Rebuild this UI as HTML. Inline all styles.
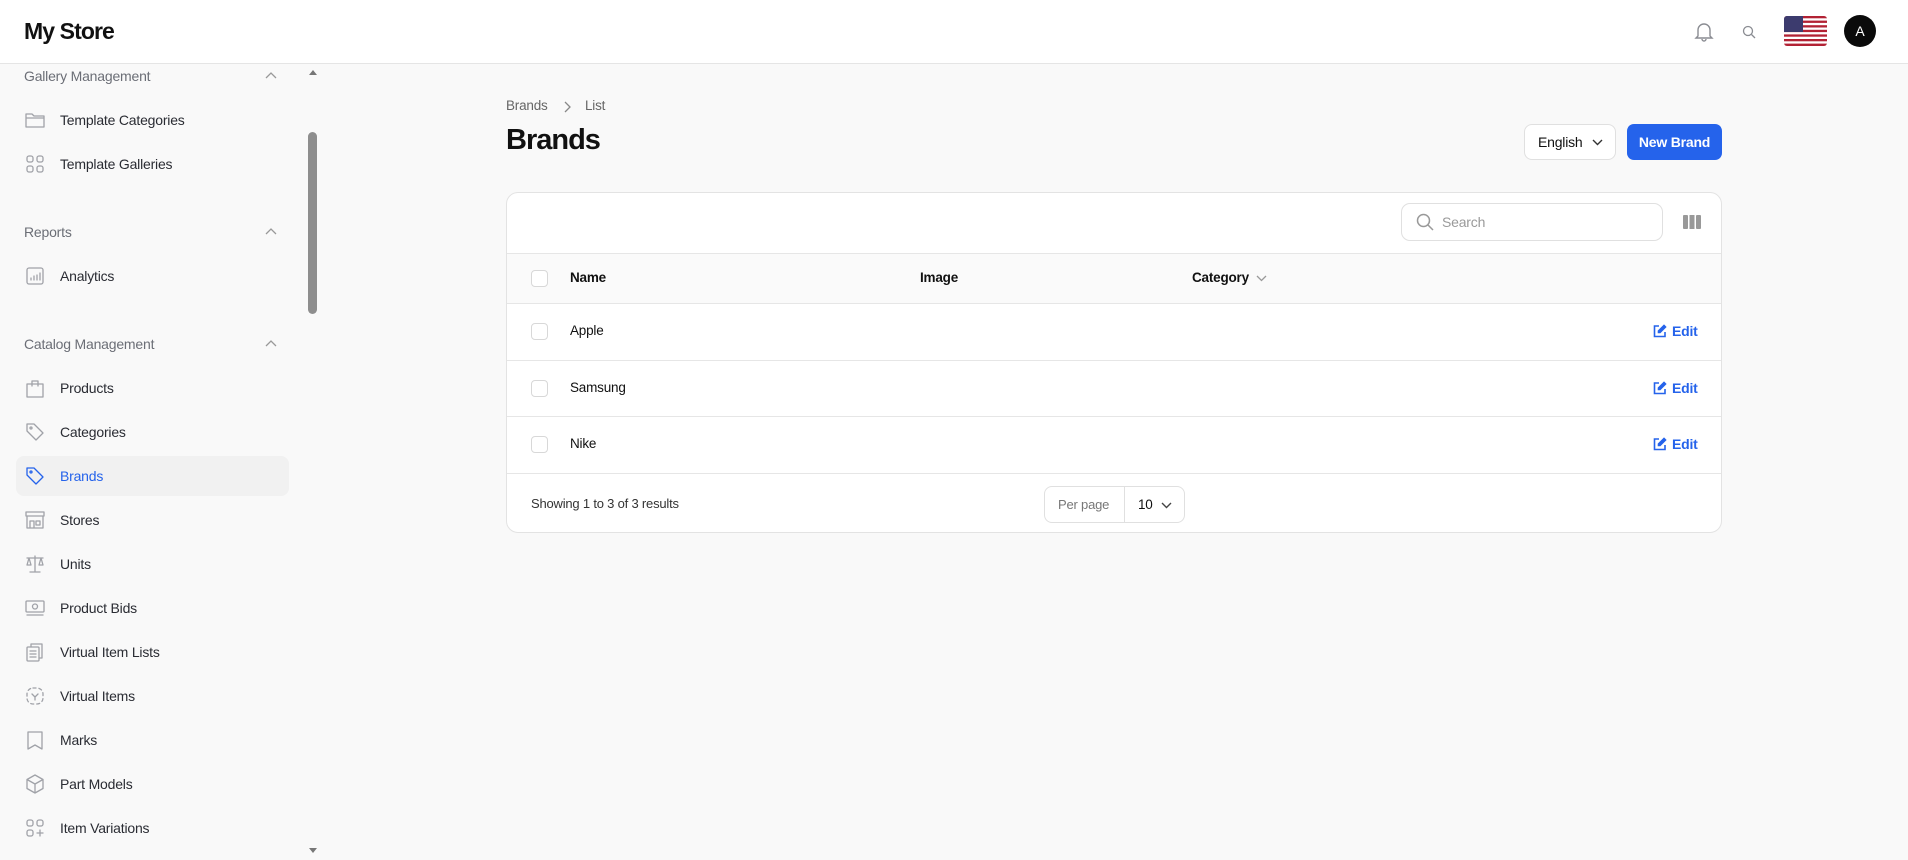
<!DOCTYPE html>
<html><head><meta charset="utf-8"><style>
*{box-sizing:border-box;margin:0;padding:0}
body{width:1908px;height:860px;overflow:hidden;background:#f9f9f9;font-family:"Liberation Sans",sans-serif;color:#111;position:relative;letter-spacing:-0.2px}
.hdr{position:absolute;left:0;top:0;width:1908px;height:64px;background:#fff;border-bottom:1px solid #e5e5e5}
.logo{position:absolute;left:24px;top:18px;font-size:23px;font-weight:bold;letter-spacing:-0.9px}
.side{position:absolute;left:0;top:64px;width:305px;height:796px;background:#f9f9f9}
.sb{position:absolute;left:305px;top:64px;width:15px;height:796px;background:#f9f9f9}
.thumb{position:absolute;left:308px;top:132px;width:9px;height:182px;background:#8e8e8e;border-radius:5px}
.grp{position:absolute;left:24px;font-size:14px;color:#6b6e76}
.chev{position:absolute;left:265px;width:12px;height:8px}
.it{position:absolute;left:24px;font-size:14px;color:#2a2c33;height:20px;line-height:20px}
.it svg{position:absolute;left:0;top:-1px;width:22px;height:22px;fill:none;stroke:#a0a2a8;stroke-width:1.3;stroke-linecap:round;stroke-linejoin:round}
.it span{position:absolute;left:36px;white-space:nowrap}
.act{position:absolute;left:16px;top:456px;width:273px;height:40px;background:#f1f1f1;border-radius:8px}
.card{position:absolute;left:506px;top:192px;width:1216px;height:341px;background:#fff;border:1px solid #e3e3e3;border-radius:12px;overflow:hidden}
.row{position:absolute;left:0;width:1216px;border-top:1px solid #e6e6e6}
.cb{position:absolute;left:24px;width:17px;height:17px;border:1px solid #d8d8d8;border-radius:4px;background:#fff}
.cell{position:absolute;font-size:13.5px}
.edit{position:absolute;left:1146px;color:#2563eb;font-weight:bold;font-size:14px}
.edit svg{position:absolute;left:0;top:1px}
.edit span{position:absolute;left:19px;top:0}
</style></head><body>
<div class="hdr">
 <div class="logo">My Store</div>
 <svg style="position:absolute;left:1694px;top:21px" width="20" height="22" viewBox="0 0 20 22" fill="none" stroke="#8a8c92" stroke-width="1.4"><path d="M4 15V9a6 6 0 0112 0v6l2 2H2z"/><path d="M8 18a2 2 0 004 0"/></svg>
 <svg style="position:absolute;left:1742px;top:25px" width="14" height="14" viewBox="0 0 14 14" fill="none" stroke="#8a8c92" stroke-width="1.3"><circle cx="6" cy="6" r="4.5"/><path d="M9.5 9.5L13 13"/></svg>
 <svg style="position:absolute;left:1784px;top:16px;border-radius:3px" width="43" height="30" viewBox="0 0 43 30"><rect width="43" height="30" fill="#fff"/><g fill="#b22234"><rect y="0" width="43" height="2.3"/><rect y="4.6" width="43" height="2.3"/><rect y="9.2" width="43" height="2.3"/><rect y="13.8" width="43" height="2.3"/><rect y="18.4" width="43" height="2.3"/><rect y="23" width="43" height="2.3"/><rect y="27.6" width="43" height="2.4"/></g><rect width="19" height="16" fill="#3c3b6e"/></svg>
 <div style="position:absolute;left:1844px;top:15px;width:32px;height:32px;border-radius:50%;background:#0a0a0a;color:#fff;font-size:14px;text-align:center;line-height:32px">A</div>
</div>
<div class="side">
</div>
<div class="sb"><div style="position:absolute;left:4px;top:6px;width:0;height:0;border-left:4px solid transparent;border-right:4px solid transparent;border-bottom:5px solid #777"></div><div style="position:absolute;left:4px;top:784px;width:0;height:0;border-left:4px solid transparent;border-right:4px solid transparent;border-top:5px solid #777"></div></div>
<div class="thumb"></div>
<div class="act"></div>
<div class="grp" style="top:68px">Gallery Management</div>
<div class="grp" style="top:224px">Reports</div>
<div class="grp" style="top:336px">Catalog Management</div>
<svg class="chev" style="top:72px" viewBox="0 0 12 8" fill="none" stroke="#999" stroke-width="1.3"><path d="M1 6l5-5 5 5"/></svg>
<svg class="chev" style="top:228px" viewBox="0 0 12 8" fill="none" stroke="#999" stroke-width="1.3"><path d="M1 6l5-5 5 5"/></svg>
<svg class="chev" style="top:340px" viewBox="0 0 12 8" fill="none" stroke="#999" stroke-width="1.3"><path d="M1 6l5-5 5 5"/></svg>

<div class="it" style="top:110px"><svg viewBox="0 0 22 22"><path d="M2 5h6l2 2h10v11H2z M2 9h18"/></svg><span>Template Categories</span></div>
<div class="it" style="top:154px"><svg viewBox="0 0 22 22"><rect x="3" y="3" width="6" height="6" rx="2"/><rect x="13" y="3" width="6" height="6" rx="2"/><rect x="3" y="13" width="6" height="6" rx="2"/><rect x="13" y="13" width="6" height="6" rx="2"/></svg><span>Template Galleries</span></div>
<div class="it" style="top:266px"><svg viewBox="0 0 22 22"><rect x="3" y="3" width="16" height="16" rx="2"/><path d="M7 15v-2M10 15v-4M13 15v-5M16 15V8"/></svg><span>Analytics</span></div>
<div class="it" style="top:378px"><svg viewBox="0 0 22 22"><path d="M3 7h16v13H3z M8 9V4h6v5"/></svg><span>Products</span></div>
<div class="it" style="top:422px"><svg viewBox="0 0 22 22"><path d="M3 3h7l9 9-7 7-9-9z"/><circle cx="7" cy="7" r="1"/></svg><span>Categories</span></div>
<div class="it" style="top:466px;color:#2563eb"><svg viewBox="0 0 22 22" style="stroke:#2563eb"><path d="M3 3h7l9 9-7 7-9-9z"/><circle cx="7" cy="7" r="1"/></svg><span>Brands</span></div>
<div class="it" style="top:510px"><svg viewBox="0 0 22 22"><path d="M2 3h18v4H2z M3 7v12h16V7 M6 19v-7h4v7 M12 12h4v4h-4z"/></svg><span>Stores</span></div>
<div class="it" style="top:554px"><svg viewBox="0 0 22 22"><path d="M11 3v16M6 19h10M3 5h16M5 5l-2 7h4zM17 5l-2 7h4z"/></svg><span>Units</span></div>
<div class="it" style="top:598px"><svg viewBox="0 0 22 22"><rect x="2" y="4" width="18" height="11" rx="1"/><circle cx="11" cy="9.5" r="2.5"/><path d="M3 18h16"/></svg><span>Product Bids</span></div>
<div class="it" style="top:642px"><svg viewBox="0 0 22 22"><rect x="3" y="6" width="12" height="14" rx="1"/><path d="M7 6V3h11v14h-3M6 10h6M6 13h6M6 16h6"/></svg><span>Virtual Item Lists</span></div>
<div class="it" style="top:686px"><svg viewBox="0 0 22 22" stroke-dasharray="3 3"><rect x="3" y="3" width="16" height="16" rx="6"/><path d="M8 9l3 3 3-3M11 12v3" stroke-dasharray="0"/></svg><span>Virtual Items</span></div>
<div class="it" style="top:730px"><svg viewBox="0 0 22 22"><path d="M4 3h14v17l-7-4-7 4z"/></svg><span>Marks</span></div>
<div class="it" style="top:774px"><svg viewBox="0 0 22 22"><path d="M11 2l8 4.5v9L11 20l-8-4.5v-9zM3 6.5l8 4.5 8-4.5M11 11v9"/></svg><span>Part Models</span></div>
<div class="it" style="top:818px"><svg viewBox="0 0 22 22"><rect x="3" y="3" width="6" height="6" rx="2"/><rect x="13" y="3" width="6" height="6" rx="2"/><rect x="3" y="13" width="6" height="6" rx="2"/><path d="M16 13v6M13 16h6"/></svg><span>Item Variations</span></div>

<div style="position:absolute;left:506px;top:98px;font-size:13.5px;color:#666">Brands</div>
<svg style="position:absolute;left:563px;top:101px" width="8" height="12" viewBox="0 0 8 12" fill="none" stroke="#888" stroke-width="1.3"><path d="M2 1l5 5-5 5"/></svg>
<div style="position:absolute;left:585px;top:98px;font-size:13.5px;color:#666">List</div>
<div style="position:absolute;left:506px;top:124px;font-size:29px;font-weight:bold;letter-spacing:-1px">Brands</div>

<div style="position:absolute;left:1524px;top:124px;width:92px;height:36px;background:#fff;border:1px solid #e0e0e0;border-radius:8px;font-size:14px;line-height:34px;padding-left:13px">English<svg style="position:absolute;left:67px;top:14px" width="11" height="7" viewBox="0 0 11 7" fill="none" stroke="#333" stroke-width="1.4"><path d="M1 1l4.5 4.5L10 1"/></svg></div>
<div style="position:absolute;left:1627px;top:124px;width:95px;height:36px;background:#2563eb;border-radius:7px;color:#fff;font-weight:bold;font-size:14px;line-height:36px;text-align:center">New Brand</div>

<div class="card">
 <div style="position:absolute;left:894px;top:10px;width:262px;height:38px;border:1px solid #e0e0e0;border-radius:9px"><svg style="position:absolute;left:14px;top:9px" width="18" height="18" viewBox="0 0 18 18" fill="none" stroke="#999" stroke-width="1.5"><circle cx="7.5" cy="7.5" r="6"/><path d="M12 12l5 5"/></svg><span style="position:absolute;left:40px;top:10px;font-size:14px;color:#9a9a9a">Search</span></div>
 <svg style="position:absolute;left:1176px;top:22px" width="18" height="14" viewBox="0 0 18 14" fill="#999"><rect x="0" y="0" width="5" height="14" rx="1"/><rect x="6.5" y="0" width="5" height="14" rx="0"/><rect x="13" y="0" width="5" height="14" rx="1"/></svg>
 <div class="row" style="top:60px;height:50px;background:#fafafa">
  <div class="cb" style="top:16px"></div>
  <div class="cell" style="left:63px;top:16px;font-weight:bold">Name</div>
  <div class="cell" style="left:413px;top:16px;font-weight:bold">Image</div>
  <div class="cell" style="left:685px;top:16px;font-weight:bold">Category</div>
  <svg style="position:absolute;left:749px;top:21px" width="11" height="7" viewBox="0 0 11 7" fill="none" stroke="#999" stroke-width="1.3"><path d="M1 1l4.5 4.5L10 1"/></svg>
 </div>
 <div class="row" style="top:110px;height:57px"><div class="cb" style="top:19px"></div><div class="cell" style="left:63px;top:19px">Apple</div><div class="edit" style="top:19px"><svg width="14" height="14" viewBox="0 0 14 14" fill="none" stroke="#2563eb" stroke-width="1.6"><path d="M6 2H1.5v10.5H12V8"/><path d="M11 1.5l1.5 1.5L7 8.5H5.5V7z" fill="#2563eb"/></svg><span>Edit</span></div></div>
 <div class="row" style="top:167px;height:56px"><div class="cb" style="top:19px"></div><div class="cell" style="left:63px;top:19px">Samsung</div><div class="edit" style="top:19px"><svg width="14" height="14" viewBox="0 0 14 14" fill="none" stroke="#2563eb" stroke-width="1.6"><path d="M6 2H1.5v10.5H12V8"/><path d="M11 1.5l1.5 1.5L7 8.5H5.5V7z" fill="#2563eb"/></svg><span>Edit</span></div></div>
 <div class="row" style="top:223px;height:57px"><div class="cb" style="top:19px"></div><div class="cell" style="left:63px;top:19px">Nike</div><div class="edit" style="top:19px"><svg width="14" height="14" viewBox="0 0 14 14" fill="none" stroke="#2563eb" stroke-width="1.6"><path d="M6 2H1.5v10.5H12V8"/><path d="M11 1.5l1.5 1.5L7 8.5H5.5V7z" fill="#2563eb"/></svg><span>Edit</span></div></div>
 <div class="row" style="top:280px;height:61px">
  <div class="cell" style="left:24px;top:22px;font-size:13px;color:#333">Showing 1 to 3 of 3 results</div>
  <div style="position:absolute;left:537px;top:12px;width:141px;height:37px;border:1px solid #e0e0e0;border-radius:8px">
   <span style="position:absolute;left:13px;top:10px;font-size:13px;color:#777">Per page</span>
   <div style="position:absolute;left:79px;top:0;width:1px;height:35px;background:#e0e0e0"></div>
   <span style="position:absolute;left:93px;top:10px;font-size:13.5px">10</span>
   <svg style="position:absolute;left:116px;top:15px" width="11" height="7" viewBox="0 0 11 7" fill="none" stroke="#444" stroke-width="1.4"><path d="M1 1l4.5 4.5L10 1"/></svg>
  </div>
 </div>
</div>
</body></html>
